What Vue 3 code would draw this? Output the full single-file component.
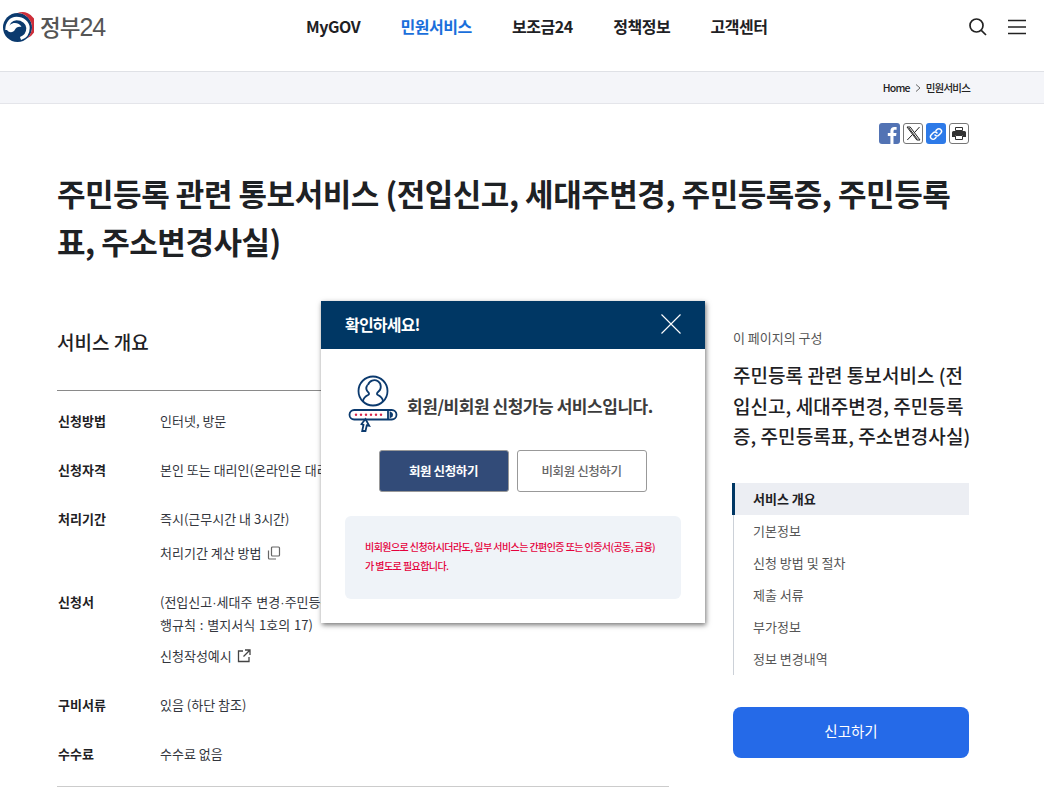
<script setup>
const menu = [
  { label: 'MyGOV' },
  { label: '민원서비스', active: true },
  { label: '보조금24' },
  { label: '정책정보' },
  { label: '고객센터' },
]
const toc = ['서비스 개요', '기본정보', '신청 방법 및 절차', '제출 서류', '부가정보', '정보 변경내역']
</script>

<template>
  <div class="page">
    <header class="top">
      <a class="logo">
        <svg width="34" height="34" viewBox="0 0 34 34">
          <circle cx="17.500" cy="17.500" r="14.500" fill="#0b3a6e" />
          <path d="M7 20C7 13 11 8.500 16.500 8.500C23 8.500 28 13 28 18C28 23 25 27 20.500 28.500" fill="none" stroke="#fff" stroke-width="3.400" />
          <path d="M7 20C9.500 23.500 13.500 22.500 15 19.500C16 17.500 18.500 16 21.500 17C19 11.500 9 11 7 20z" fill="#fff" />
          <path d="M17.500 3A14.500 14.500 0 0 1 27.500 28A13 13 0 0 0 17.500 3z" fill="#cd2e3a" />
        </svg>
        <span class="logo-text">정부<b>24</b></span>
      </a>
      <nav class="gnb">
        <a v-for="m in menu" :key="m.label" :class="{ on: m.active }">{{ m.label }}</a>
      </nav>
      <div class="tools">
        <svg width="20" height="20" viewBox="0 0 20 20" fill="none" stroke="#222" stroke-width="1.700">
          <circle cx="8.500" cy="8.500" r="6.500" />
          <path d="M13.300 13.300 18 18" />
        </svg>
        <svg width="18" height="16" viewBox="0 0 18 16" stroke="#222" stroke-width="1.600">
          <path d="M0 1.500h18M0 8h18M0 14.500h18" />
        </svg>
      </div>
    </header>

    <div class="crumb">
      <div class="crumb-in">
        <span>Home</span>
        <svg width="6" height="8" viewBox="0 0 6 8" fill="none" stroke="#666"><path d="M1 .5 5 4 1 7.500" /></svg>
        <span>민원서비스</span>
      </div>
    </div>

    <div class="share">
      <span class="sb fb">
        <svg width="21" height="21" viewBox="0 0 21 21"><path d="M14.500 21v-8h2.600l.4-3h-3V8.200c0-.9.300-1.500 1.500-1.500h1.600V4c-.3 0-1.200-.1-2.300-.1-2.300 0-3.900 1.400-3.900 4V10H8.800v3h2.600v8z" fill="#fff" /></svg>
      </span>
      <span class="sb x">
        <svg width="15" height="15" viewBox="0 0 15 15" fill="none" stroke="#222"><path d="M1 1h3.200l9.800 13h-3.200zM2.800 1.800l8.600 11.500M13.500 1 8.400 6.700M6.500 8.500 1.300 14" /></svg>
      </span>
      <span class="sb link">
        <svg width="14" height="14" viewBox="0 0 14 14" fill="none" stroke="#fff" stroke-width="1.500" stroke-linecap="round"><path d="M6 8a2.500 2.500 0 0 0 3.700.2l2-2A2.600 2.600 0 0 0 8 2.500l-1 1M8 6a2.500 2.500 0 0 0-3.700-.2l-2 2A2.600 2.600 0 0 0 6 11.500l1-1" /></svg>
      </span>
      <span class="sb print">
        <svg width="14" height="13" viewBox="0 0 14 13"><path d="M3.500.5h7v3h-7z" fill="#fff" stroke="#333" /><path d="M1.500 4h11A1.500 1.500 0 0 1 14 5.500V10h-3V8H3v2H0V5.500A1.500 1.500 0 0 1 1.500 4z" fill="#333" /><path d="M3.500 8.500h7v4h-7z" fill="#fff" stroke="#333" /></svg>
      </span>
    </div>

    <h1 class="title">주민등록 관련 통보서비스 (전입신고, 세대주변경, 주민등록증, 주민등록표, 주소변경사실)</h1>

    <div class="body">
      <main class="main">
        <h2 class="sec">서비스 개요</h2>
        <dl class="info">
          <div class="row">
            <dt>신청방법</dt>
            <dd>인터넷, 방문</dd>
          </div>
          <div class="row">
            <dt>신청자격</dt>
            <dd>본인 또는 대리인(온라인은 대리 신청 불가)</dd>
          </div>
          <div class="row">
            <dt>처리기간</dt>
            <dd>
              <p>즉시(근무시간 내 3시간)</p>
              <p class="sub">처리기간 계산 방법
                <svg width="14" height="14" viewBox="0 0 14 14" fill="none" stroke="#666" stroke-width="1.200"><rect x="4.500" y="1" width="8" height="9" rx="1" /><path d="M1.500 4.500V12a1 1 0 0 0 1 1H9" /></svg>
              </p>
            </dd>
          </div>
          <div class="row">
            <dt>신청서</dt>
            <dd>
              <p class="wrap">(전입신고<span class="dot">·</span>세대주 변경<span class="dot">·</span>주민등록증 재발급 통보서비스 신청서) 주민등록법 시<br />행규칙 : 별지서식 1호의 17)</p>
              <p class="sub">신청작성예시
                <svg width="14" height="14" viewBox="0 0 14 14" fill="none" stroke="#444" stroke-width="1.300"><path d="M6 2H1.500v10.500H12V8M8 1h5v5M13 1 6.500 7.500" /></svg>
              </p>
            </dd>
          </div>
          <div class="row">
            <dt>구비서류</dt>
            <dd>있음 (하단 참조)</dd>
          </div>
          <div class="row">
            <dt>수수료</dt>
            <dd>수수료 없음</dd>
          </div>
        </dl>
      </main>

      <aside class="side">
        <p class="side-cap">이 페이지의 구성</p>
        <p class="side-title">주민등록 관련 통보서비스 (전입신고, 세대주변경, 주민등록증, 주민등록표, 주소변경사실)</p>
        <ul class="toc">
          <li v-for="(t, i) in toc" :key="t" :class="{ on: i === 0 }">{{ t }}</li>
        </ul>
        <a class="report">신고하기</a>
      </aside>
    </div>

    <section class="modal">
      <div class="m-head">
        <strong>확인하세요!</strong>
        <svg width="20" height="20" viewBox="0 0 20 20" stroke="#fff" stroke-width="1.100"><path d="M.5.500l19 19M19.500.500l-19 19" /></svg>
      </div>
      <div class="m-body">
        <div class="m-msg">
          <svg width="50" height="58" viewBox="0 0 50 58" fill="none" stroke="#0b3a6e" stroke-width="1.800">
            <circle cx="25" cy="16" r="14.500" />
            <path d="M20 10a6.500 6.500 0 1 1 10 7c-1 1-1.500 2-.5 2.700 3 1.400 5 3 5.500 6.300M15 26c.5-3.300 2.500-4.900 5.500-6.300 1-.7.5-1.700-.5-2.700-1.800-2-2-5-.5-7" />
            <rect x="1.500" y="35" width="47" height="9.500" rx="4.700" />
            <path d="M40 35v9.500M42.500 37.500c2.200.8 2.200 3.700 0 4.500z" />
            <path d="M17.500 44l-4 5 2 .8-1.300 6.200h3.300l1.300-5.700 2.400.5z" fill="#fff" />
            <g fill="#d8264a" stroke="none">
              <circle cx="8" cy="39.700" r="1.200" /><circle cx="13" cy="39.700" r="1.200" /><circle cx="18" cy="39.700" r="1.200" /><circle cx="23" cy="39.700" r="1.200" /><circle cx="28" cy="39.700" r="1.200" /><circle cx="33" cy="39.700" r="1.200" />
            </g>
          </svg>
          <p>회원/비회원 신청가능 서비스입니다.</p>
        </div>
        <div class="m-btns">
          <a class="btn pri">회원 신청하기</a>
          <a class="btn sec-btn">비회원 신청하기</a>
        </div>
        <div class="m-note">비회원으로 신청하시더라도, 일부 서비스는 간편인증 또는 인증서(공동, 금융)<br />가 별도로 필요합니다.</div>
      </div>
    </section>
  </div>
</template>

<style>
html, body { margin: 0; background: #fff; }
</style>

<style scoped>
* { box-sizing: border-box; }
.page {
  position: relative;
  width: 1044px;
  height: 790px;
  overflow: hidden;
  background: #fff;
  color: #1e2124;
  font-family: "Noto Sans CJK KR", "Noto Sans", sans-serif;
}
p, h1, h2, dl, dd, dt, ul { margin: 0; padding: 0; }
.top {
  height: 72px;
  display: flex;
  justify-content: space-between;
  align-items: flex-start;
  border-bottom: 1px solid #dfe1e6;
  padding-right: 18px;
}
.logo { display: flex; align-items: center; gap: 6px; margin-top: 9px; width: 306px; }
.logo-text { font-size: 22.500px; font-weight: 500; color: #555; letter-spacing: -1px; line-height: 34px; }
.logo-text b { font-family: "Liberation Sans", sans-serif; font-size: 25px; font-weight: 400; letter-spacing: -1px; }
.gnb {
  flex: 1;
  margin-top: 14px;
  display: flex;
  gap: 40.300px;
  font-size: 16px;
  font-weight: 700;
  line-height: 24px;
  letter-spacing: -.45px;
}
.gnb a.on { color: #1a6fdb; }
.tools { margin-top: 17px; display: flex; gap: 20px; align-items: center; }
.crumb { height: 32px; background: #f4f5f9; border-bottom: 1px solid #e4e5ea; }
.crumb-in {
  display: flex;
  justify-content: flex-end;
  align-items: center;
  gap: 5px;
  height: 31px;
  width: 970px;
  font-size: 10.500px;
  letter-spacing: -.8px;
  color: #222;
  font-weight: 500;
}
.share { display: flex; justify-content: flex-end; gap: 3px; width: 969px; margin-top: 19px; height: 22px; }
.sb { width: 20px; height: 21px; border-radius: 3px; display: flex; align-items: center; justify-content: center; overflow: hidden; }
.fb { width: 21px; background: #5273b4; }
.x, .print { background: #fff; border: 1px solid #767676; }
.link { background: #2d7ae8; }
.title {
  width: 900px;
  margin: 24px 0 0 57px;
  font-size: 31px;
  font-weight: 700;
  line-height: 48px;
  letter-spacing: -.46px;
  color: #1e2124;
}
.body { display: flex; gap: 64px; margin: 62px 0 0 58px; }
.main { width: 611px; padding-top: 1px; flex: none; }
.sec { font-size: 19px; font-weight: 500; line-height: 28px; height: 63px; border-bottom: 1px solid #8a8a8a; letter-spacing: 0; margin-left: -1px; padding-left: 0; }
.info { padding: 19px 0 21px; border-bottom: 1px solid #ccc; margin-left: -1px; padding-left: 1px; font-size: 13px; line-height: 22px; color: #33363d; }
.row { display: flex; padding-bottom: 27px; }
.row:last-child { padding-bottom: 0; }
dt { width: 102px; font-weight: 700; color: #1e2124; flex: none; }
dd { flex: 1; }
.wrap { white-space: nowrap; overflow: hidden; word-spacing: 1px; }
.dot { font-family: "Liberation Sans", sans-serif; }
.sub { margin-top: 12px; display: flex; align-items: center; gap: 5px; }
.wrap + .sub { margin-top: 9px; }
.side { width: 236px; flex: none; }
.side-cap { font-size: 13px; line-height: 22px; color: #555; }
.side-title { font-size: 19px; font-weight: 500; line-height: 30.500px; margin-top: 11px; letter-spacing: .05px; width: 240px; }
.toc { list-style: none; margin-top: 31px; border-left: 1px solid #ccd1d8; font-size: 13px; color: #555; }
.toc li { height: 32px; line-height: 32px; padding-left: 19px; }
.toc li.on { background: #eceef3; color: #1e2124; font-weight: 700; box-shadow: inset 3px 0 0 #003764; margin-left: -2px; padding-left: 21px; }
.report {
  display: block;
  height: 51px;
  line-height: 48px;
  margin-top: 32px;
  background: #256ae8;
  border-radius: 8px;
  color: #fff;
  text-align: center;
  font-size: 14.500px;
}
.modal {
  position: absolute;
  left: 321px;
  top: 301px;
  width: 384px;
  height: 322px;
  background: #fff;
  box-shadow: 1px 2px 5px rgba(0, 0, 0, .55);
}
.m-head {
  height: 48px;
  background: #003764;
  color: #fff;
  display: flex;
  justify-content: space-between;
  align-items: center;
  padding: 0 24px 2px;
  font-size: 16px;
  letter-spacing: -.8px;
}
.m-body { padding: 0 24px; }
.m-msg { display: flex; align-items: center; gap: 9px; height: 60px; margin-top: 25px; margin-left: 3px; }
.m-msg p { font-size: 17px; font-weight: 700; color: #3c3c3c; letter-spacing: -.45px; padding-top: 2px; }
.m-btns { display: flex; justify-content: center; gap: 8px; margin-top: 16px; margin-left: -1px; }
.btn {
  width: 130px;
  height: 42px;
  border-radius: 3px;
  text-align: center;
  font-size: 12.500px;
  line-height: 40px;
  font-weight: 500;
  letter-spacing: -.4px;
  border: 1px solid #999;
}
.pri { background: #324b78; color: #fff; font-weight: 700; }
.sec-btn { background: #fff; color: #666; }
.m-note {
  margin-top: 24px;
  height: 83px;
  background: #eff3f8;
  border-radius: 6px;
  padding: 21px 20px;
  color: #e5003c;
  font-size: 10px;
  line-height: 19px;
  font-weight: 500;
  letter-spacing: -.57px;
  white-space: nowrap;
}
</style>
